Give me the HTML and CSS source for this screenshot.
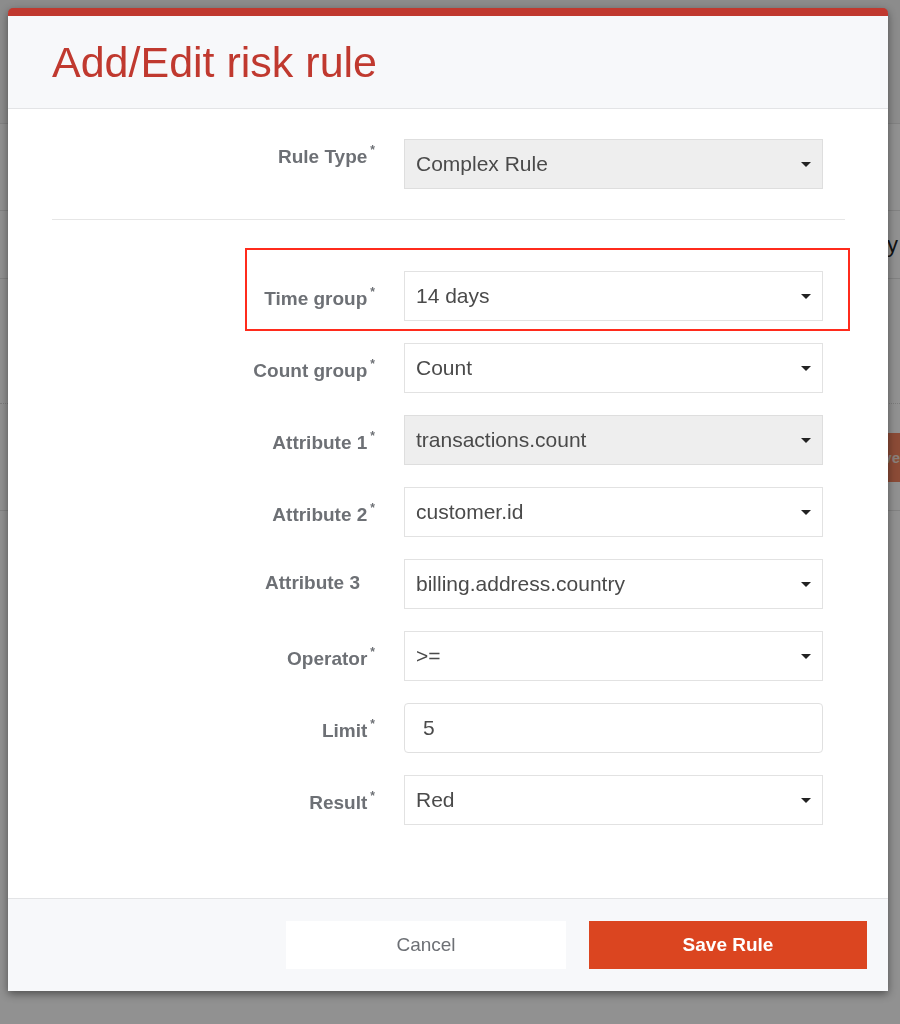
FILE: index.html
```html
<!DOCTYPE html>
<html lang="en">
<head>
<meta charset="utf-8">
<title>Add/Edit risk rule</title>
<link rel="stylesheet" href="styles.css">
</head>
<body>
<div class="page">
  <div class="page-top"></div>
  <div class="page-row r1"></div>
  <div class="page-row r2"><span class="page-text">Summary</span></div>
  <div class="page-row r3">
    <div class="dotted"></div>
    <div class="page-actions"><span class="page-btn">Save</span></div>
  </div>
  <div class="r4"></div>
</div>
<div class="backdrop"></div>

<div class="modal">
  <div class="modal-header">
    <h1 class="title">Add/Edit risk rule</h1>
  </div>
  <div class="modal-body">
    <div class="form-row">
      <div class="label top">Rule Type<span class="req">*</span></div>
      <div class="select disabled"><span>Complex Rule</span><span class="caret"></span></div>
    </div>
    <div class="divider"></div>
    <div class="rows">
      <div class="form-row highlight-row">
        <div class="label">Time group<span class="req">*</span></div>
        <div class="select"><span>14 days</span><span class="caret"></span></div>
        <div class="highlight"></div>
      </div>
      <div class="form-row">
        <div class="label">Count group<span class="req">*</span></div>
        <div class="select"><span>Count</span><span class="caret"></span></div>
      </div>
      <div class="form-row">
        <div class="label">Attribute 1<span class="req">*</span></div>
        <div class="select disabled"><span>transactions.count</span><span class="caret"></span></div>
      </div>
      <div class="form-row">
        <div class="label">Attribute 2<span class="req">*</span></div>
        <div class="select"><span>customer.id</span><span class="caret"></span></div>
      </div>
      <div class="form-row">
        <div class="label plain">Attribute 3</div>
        <div class="select"><span>billing.address.country</span><span class="caret"></span></div>
      </div>
      <div class="form-row">
        <div class="label">Operator<span class="req">*</span></div>
        <div class="select"><span>&gt;=</span><span class="caret"></span></div>
      </div>
      <div class="form-row">
        <div class="label">Limit<span class="req">*</span></div>
        <div class="select input"><span>5</span></div>
      </div>
      <div class="form-row">
        <div class="label">Result<span class="req">*</span></div>
        <div class="select"><span>Red</span><span class="caret"></span></div>
      </div>
    </div>
  </div>
  <div class="modal-footer">
    <div class="btn btn-cancel">Cancel</div>
    <div class="btn btn-save">Save Rule</div>
  </div>
</div>
</body>
</html>
```
FILE: styles.css
```css
* { box-sizing: border-box; }
html, body { margin: 0; padding: 0; }
body {
  font-family: "Liberation Sans", Arial, Helvetica, sans-serif;
  background: #ffffff;
  width: 900px;
  height: 1024px;
  overflow: hidden;
  position: relative;
}

/* underlying page */
.page-top { height: 124px; background: #f6f6f6; border-bottom: 1px solid #e4e4e4; }
.page-row { border-bottom: 1px solid #e4e4e4; }
.r1 { height: 87px; }
.r2 {
  height: 68px;
  display: flex;
  justify-content: flex-end;
  align-items: center;
  padding-right: 2px;
}
.page-text { font-size: 22px; color: #222222; }
.r3 { height: 232px; }
.dotted { height: 125px; border-bottom: 1px dotted #d8d8d8; }
.page-actions { display: flex; justify-content: flex-end; margin-top: 29px; }
.page-btn {
  height: 49px;
  display: flex;
  align-items: center;
  padding: 0 0 0 20px;
  background: #f5855f;
  color: #f3e0d8;
  font-size: 15px;
  font-weight: bold;
}
.r4 { height: 200px; }

.backdrop {
  position: fixed;
  top: 0; left: 0; right: 0; bottom: 0;
  background: rgba(0, 0, 0, 0.43);
}

/* modal */
.modal {
  position: absolute;
  top: 8px;
  left: 8px;
  width: 880px;
  background: #ffffff;
  border-top: 8px solid #c0392f;
  border-radius: 5px 5px 2px 2px;
  box-shadow: 0 3px 9px rgba(0, 0, 0, 0.45);
}
.modal-header {
  background: #f7f8fa;
  padding: 25px 44px;
  border-bottom: 1px solid #e3e4e6;
}
.title {
  margin: 0;
  font-size: 43px;
  line-height: 42px;
  font-weight: normal;
  color: #c0392f;
}
.modal-body { padding: 30px 43px 73px 44px; }
.form-row {
  display: grid;
  grid-template-columns: 324px 419px;
  column-gap: 28px;
}
.rows { display: flex; flex-direction: column; gap: 22px; }
.label {
  text-align: right;
  font-weight: bold;
  font-size: 19px;
  line-height: 20px;
  color: #6d7075;
  padding-top: 18px;
  padding-right: 1px;
  white-space: nowrap;
}
.label.plain { padding-top: 14px; padding-right: 16px; }
.label.top { padding-top: 8px; }
.req {
  font-size: 12px;
  position: relative;
  top: -9px;
  line-height: 0;
  margin-left: 3px;
}
.select {
  height: 50px;
  border: 1px solid #e2e2e2;
  background: #ffffff;
  display: flex;
  align-items: center;
  justify-content: space-between;
  padding: 0 11px;
  font-size: 21px;
  color: #4a4a4a;
}
.select.disabled { background: #eeeeee; border-color: #dedede; }
.select.input { border-radius: 4px; padding-left: 18px; border-color: #e0e0e0; }
.caret {
  width: 0;
  height: 0;
  border-left: 5px solid transparent;
  border-right: 5px solid transparent;
  border-top: 5px solid #222222;
}
.divider { height: 1px; background: #e6e6e6; margin: 30px 0 51px; }

.highlight-row { position: relative; }
.highlight {
  position: absolute;
  left: 193px;
  top: -23px;
  width: 605px;
  height: 83px;
  border: 2px solid #ff2b1c;
  pointer-events: none;
}

.modal-footer {
  background: #f7f8fa;
  border-top: 1px solid #e3e4e6;
  padding: 22px 21px;
  display: flex;
  justify-content: flex-end;
  gap: 23px;
}
.btn {
  height: 48px;
  display: flex;
  align-items: center;
  justify-content: center;
  font-size: 19px;
}
.btn-cancel { width: 280px; background: #ffffff; color: #6d7075; }
.btn-save { width: 278px; background: #db4520; color: #ffffff; font-weight: bold; }
```
